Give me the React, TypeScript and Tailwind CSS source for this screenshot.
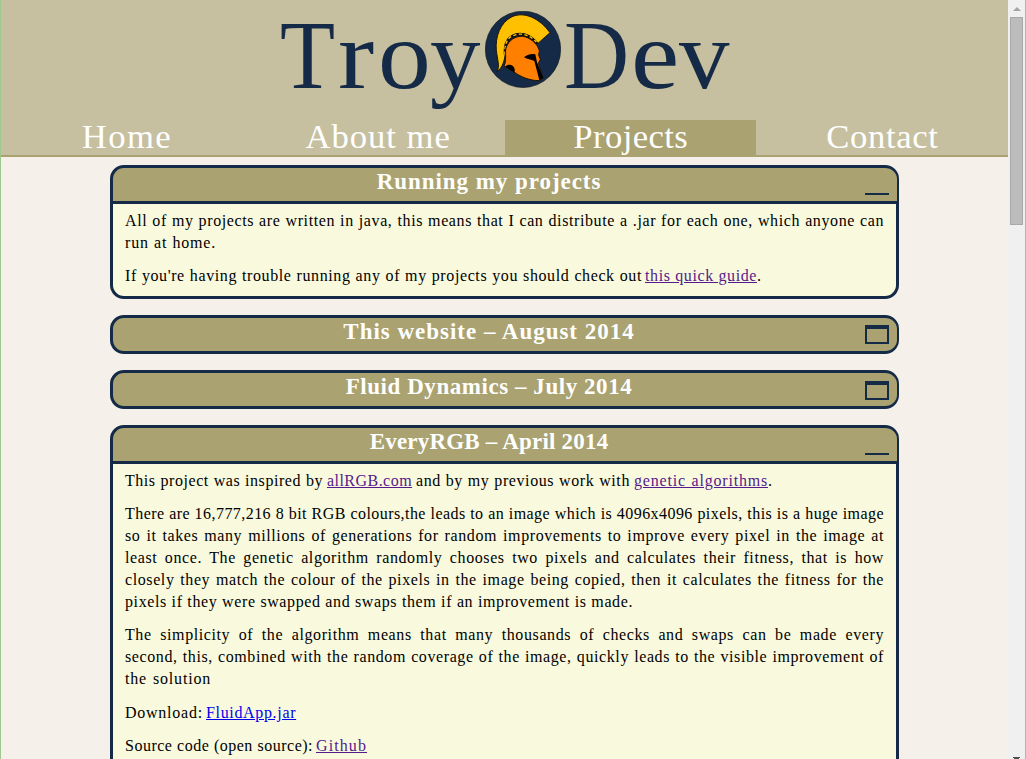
import React from "react";

type Segment = { text: string; cls: string; link?: "visited" | "fresh" };
type Line = Segment[];

const full = (text: string, cls = "w-[759px] tracking-[0.6px]"): Line => [{ text, cls }];

const runningParagraphs: Line[][] = [
  [
    full("All of my projects are written in java, this means that I can distribute a .jar for each one, which anyone can"),
    full("run at home.", "w-[91px] tracking-[0.8px]"),
  ],
  [
    [
      { text: "If you're having trouble running any of my projects you should check out", cls: "w-[517px] tracking-[0.6px]" },
      { text: "this quick guide", cls: "ml-[3px] w-[112px] tracking-[0.6px]", link: "visited" },
      { text: ".", cls: "" },
    ],
  ],
];

const rgbParagraphs: Line[][] = [
  [
    [
      { text: "This project was inspired by", cls: "w-[198px] tracking-[0.55px]" },
      { text: "allRGB.com", cls: "ml-1 w-[85px] tracking-[0.46px]", link: "visited" },
      { text: "and by my previous work with", cls: "ml-1 w-[214px] tracking-[0.6px]" },
      { text: "genetic algorithms", cls: "ml-1 w-[134px] tracking-[0.8px]", link: "visited" },
      { text: ".", cls: "" },
    ],
  ],
  [
    full("There are 16,777,216 8 bit RGB colours,the leads to an image which is 4096x4096 pixels, this is a huge image", "w-[759px] tracking-[0.44px]"),
    full("so it takes many millions of generations for random improvements to improve every pixel in the image at"),
    full("least once. The genetic algorithm randomly chooses two pixels and calculates their fitness, that is how"),
    full("closely they match the colour of the pixels in the image being copied, then it calculates the fitness for the"),
    full("pixels if they were swapped and swaps them if an improvement is made.", "w-[508px] tracking-[0.6px]"),
  ],
  [
    full("The simplicity of the algorithm means that many thousands of checks and swaps can be made every"),
    full("second, this, combined with the random coverage of the image, quickly leads to the visible improvement of", "w-[761px] tracking-[0.6px]"),
    full("the solution", "w-[86px] tracking-[0.8px]"),
  ],
  [
    [
      { text: "Download:", cls: "w-[78px] tracking-[0.75px]" },
      { text: "FluidApp.jar", cls: "ml-[3px] w-[90px] tracking-[0.66px]", link: "fresh" },
    ],
  ],
  [
    [
      { text: "Source code (open source):", cls: "w-[188px] tracking-[0.5px]" },
      { text: "Github", cls: "ml-[3px] w-[51px] tracking-[1.1px]", link: "visited" },
    ],
  ],
];

function Paragraphs({ items }: { items: Line[][] }) {
  return (
    <div className="flex flex-col gap-[11px]">
      {items.map((lines, i) => (
        <p key={i} className={"text-[16px] leading-[22px] text-black" + (i === 3 ? " pt-px" : "")}>
          {lines.map((line, j) => (
            <span key={j} className="flex whitespace-nowrap">
              {line.map((s, k) => {
                const base = "block text-justify [text-align-last:justify] " + s.cls;
                if (!s.link) return <span key={k} className={base}>{s.text}</span>;
                const color = s.link === "visited" ? " text-[#551a8b]" : " text-[#0000ee]";
                return (
                  <a key={k} href="#" className={base + color + " underline"}>
                    {s.text}
                  </a>
                );
              })}
            </span>
          ))}
        </p>
      ))}
    </div>
  );
}

type CardProps = { title: string; titleCls?: string; iconCls: string; bodyCls?: string; children?: React.ReactNode };

function Card({ title, titleCls = "tracking-[0.95px]", iconCls, bodyCls = "pb-[9px]", children }: CardProps) {
  const radius = children ? "rounded-t-[14px]" : "rounded-[14px]";
  return (
    <section className="w-[789px]">
      <div className={"flex h-[39px] items-start border-[3px] border-r-2 border-[#142a47] bg-[#aaa270] pr-2 " + radius}>
        <h2 className={"flex-1 text-center text-[23px] leading-7 font-bold text-white " + titleCls}>{title}</h2>
        <button aria-label="Toggle section" className={"w-6 border-[#142a47] " + iconCls} />
      </div>
      {children && (
        <div className={"rounded-b-[14px] border-x-[3px] border-b-[3px] border-[#142a47] bg-[#f9f9de] px-3 pt-1.5 " + bodyCls}>
          {children}
        </div>
      )}
    </section>
  );
}

function Helmet() {
  return (
    <svg viewBox="45 33 228 231" className="mt-[11px] ml-[5px] h-[77px] w-[76px] shrink-0">
      <ellipse cx="159" cy="148" rx="113" ry="114.5" fill="#142a47" stroke="#101820" strokeWidth="2" />
      <path
        d="M81 215 C90 199 82 179 79 151 C75 111 91 67 126 50 C163 34 208 54 240 98 L203 131 C187 108 165 98 143 101 C116 105 105 125 106 146 C107 176 98 204 81 215 Z"
        fill="#ffc000"
        stroke="#171309"
        strokeWidth="3"
      />
      <path d="M106 165 C104 140 108 124 120 114 C145 95 178 101 201 131" fill="none" stroke="#101010" strokeWidth="9" />
      <path d="M105 165 C103 139 108 123 120 112 C146 95 176 101 199 126" fill="none" stroke="#ffc000" strokeWidth="4" strokeDasharray="10 7" />
      <path
        d="M102 198 C111 180 104 162 108 144 C115 121 137 107 158 109 C178 111 203 131 208 152 L206 166 L211 178 L205 190 L219 234 L207 242 C180 242 153 231 135 218 Z"
        fill="#ff8000"
        stroke="#171309"
        strokeWidth="3"
      />
      <path d="M106 200 C113 191 130 192 134 207 L134 218 Z" fill="#000" />
      <path d="M162 172 C173 163 185 161 196 163 L201 187 L220 234 L208 241 L193 183 C182 178 173 179 162 172 Z" fill="#000" />
    </svg>
  );
}

const navItems = [
  { label: "Home", cls: "tracking-[1.3px]", inner: "scale-x-[1.05]" },
  { label: "About me", cls: "tracking-[0.9px]", inner: "scale-x-[1.05]" },
  { label: "Projects", cls: "tracking-[0.4px] bg-[#aaa270]", inner: "scale-x-[1.05]" },
  { label: "Contact", cls: "tracking-[0.6px]", inner: "scale-x-[1.05]" },
];

const minimise = "mt-[25px] h-0.5 border-t-2";

export default function App() {
  return (
    <div className="flex h-[759px] w-[1026px] overflow-hidden border-x border-[#9cc98b] bg-[#f5f0e9] font-['Liberation_Serif',serif]">
      <main className="w-[1007px] shrink-0">
        <header className="h-[157px] border-b-2 border-[#aaa270] bg-[#c7c0a0]">
          <h1 className="flex h-[120px] pl-[279px] text-[97px] leading-[112px] whitespace-nowrap text-[#142a47]">
            <span className="flex w-[200px]">
              <span className="w-[58px] origin-left scale-x-[0.93]">T</span>
              <span className="w-[40px] origin-left scale-x-[1.12]">r</span>
              <span className="w-[52px] origin-left scale-x-[1.09]">o</span>
              <span className="origin-left scale-x-[1.04]">y</span>
            </span>
            <Helmet />
            <span className="ml-[3px] flex">
              <span className="w-[67px] origin-left scale-x-[0.93]">D</span>
              <span className="w-[48px] origin-left scale-x-[1.12]">e</span>
              <span className="origin-left scale-x-[1.04]">v</span>
            </span>
          </h1>
          <nav className="flex h-[35px]">
            {navItems.map((n) => (
              <a key={n.label} href="#" className={"flex-1 text-center text-[33px] leading-[35px] text-white " + n.cls}>
                <span className={"inline-block " + n.inner}>{n.label}</span>
              </a>
            ))}
          </nav>
        </header>
        <div className="flex flex-col gap-4 pt-2 pl-[109px]">
          <Card title="Running my projects" iconCls={minimise}>
            <Paragraphs items={runningParagraphs} />
          </Card>
          <Card title="This website – August 2014" titleCls="tracking-[0.98px]" iconCls="mt-[7px] h-[19px] border-2 border-t-4" />
          <Card title="Fluid Dynamics – July 2014" titleCls="tracking-[0.55px]" iconCls="mt-2 h-[19px] border-2 border-t-4" />
          <Card title="EveryRGB – April 2014" titleCls="tracking-[0.2px]" iconCls={minimise} bodyCls="pb-16">
            <Paragraphs items={rgbParagraphs} />
          </Card>
        </div>
      </main>
      <aside className="flex w-[17px] shrink-0 flex-col items-center justify-between bg-[#f0f0f0]">
        <div className="flex flex-col items-center">
          <svg viewBox="0 0 8 4" className="mt-[7px] h-1 w-2">
            <path d="M4 0 L8 4 H0 Z" fill="#a3a3a3" />
          </svg>
          <div className="mt-1.5 h-[208px] w-[13px] border border-[#a8a8a8] bg-[#bcbcbc]" />
        </div>
        <svg viewBox="0 0 7 2" className="h-0.5 w-[7px]">
          <path d="M0 0 H7 V1 H6 V2 H1 V1 H0 Z" fill="#505050" />
        </svg>
      </aside>
    </div>
  );
}
